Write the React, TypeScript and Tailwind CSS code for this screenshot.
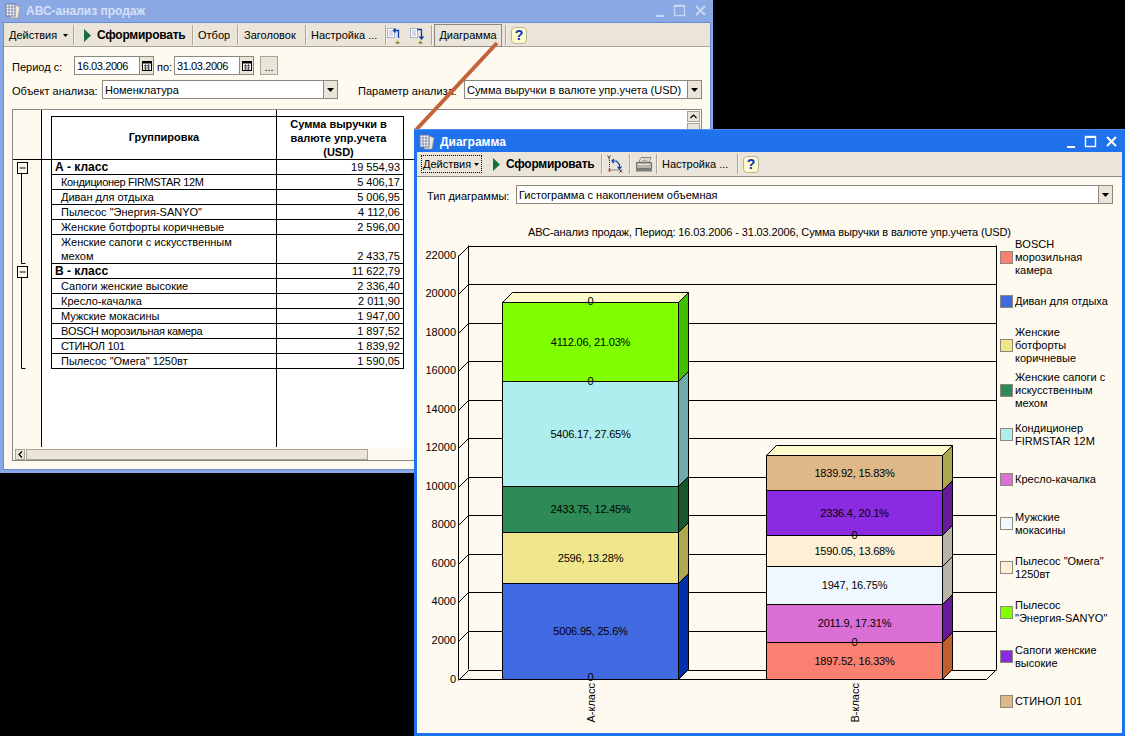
import React from 'react';

const ff = "font-['Liberation_Sans',Arial,sans-serif]";

const rowsA = [
  { name: 'Кондиционер FIRMSTAR 12M', val: '5 406,17', tight: true },
  { name: 'Диван для отдыха', val: '5 006,95' },
  { name: 'Пылесос "Энергия-SANYO"', val: '4 112,06' },
  { name: 'Женские ботфорты коричневые', val: '2 596,00' },
];
const rowsB = [
  { name: 'Сапоги женские высокие', val: '2 336,40' },
  { name: 'Кресло-качалка', val: '2 011,90' },
  { name: 'Мужские мокасины', val: '1 947,00' },
  { name: 'BOSCH морозильная камера', val: '1 897,52', tight: true },
  { name: 'СТИНОЛ 101', val: '1 839,92', tight: true },
  { name: 'Пылесос "Омега" 1250вт', val: '1 590,05' },
];

const legend = [
  { color: 'bg-[#FA8072]', text: 'BOSCH\nморозильная\nкамера' },
  { color: 'bg-[#4169E1]', text: 'Диван для отдыха' },
  { color: 'bg-[#F0E68C]', text: 'Женские\nботфорты\nкоричневые' },
  { color: 'bg-[#2E8B57]', text: 'Женские сапоги с\nискусственным\nмехом' },
  { color: 'bg-[#AFEEEE]', text: 'Кондиционер\nFIRMSTAR 12M' },
  { color: 'bg-[#DA70D6]', text: 'Кресло-качалка' },
  { color: 'bg-[#F0F8FF]', text: 'Мужские\nмокасины' },
  { color: 'bg-[#FFEFD5]', text: 'Пылесос "Омега"\n1250вт' },
  { color: 'bg-[#7FFF00]', text: 'Пылесос\n"Энергия-SANYO"' },
  { color: 'bg-[#8A2BE2]', text: 'Сапоги женские\nвысокие' },
  { color: 'bg-[#DEB887]', text: 'СТИНОЛ 101' },
];

type Seg = { y1: number; y2: number; fill: string; side: string; label: string };

const barA: Seg[] = [
  { y1: 302.5, y2: 381.5, fill: '#7FFF00', side: '#40BF00', label: '4112.06, 21.03%' },
  { y1: 381.5, y2: 486.5, fill: '#AFEEEE', side: '#6FAAAD', label: '5406.17, 27.65%' },
  { y1: 486.5, y2: 532.5, fill: '#2E8B57', side: '#17572C', label: '2433.75, 12.45%' },
  { y1: 532.5, y2: 583.5, fill: '#F0E68C', side: '#AFA84E', label: '2596, 13.28%' },
  { y1: 583.5, y2: 679.5, fill: '#4169E1', side: '#0030AA', label: '5006.95, 25.6%' },
];
const barB: Seg[] = [
  { y1: 455.5, y2: 490.5, fill: '#DEB887', side: '#ADA84E', label: '1839.92, 15.83%' },
  { y1: 490.5, y2: 535.5, fill: '#8A2BE2', side: '#661A99', label: '2336.4, 20.1%' },
  { y1: 535.5, y2: 566.5, fill: '#FFEFD5', side: '#B8B4A8', label: '1590.05, 13.68%' },
  { y1: 566.5, y2: 604.5, fill: '#F0F8FF', side: '#B8B4A8', label: '1947, 16.75%' },
  { y1: 604.5, y2: 642.5, fill: '#DA70D6', side: '#661A99', label: '2011.9, 17.31%' },
  { y1: 642.5, y2: 679.5, fill: '#FA8072', side: '#BF5F30', label: '1897.52, 16.33%' },
];

const ticks = [22000, 20000, 18000, 16000, 14000, 12000, 10000, 8000, 6000, 4000, 2000, 0];

const Bar = ({ x1, x2, segs, zeros, axis }: { x1: number; x2: number; segs: Seg[]; zeros: number[]; axis: string }) => {
  const cx = (x1 + x2) / 2;
  const top = segs[0].y1;
  return (
    <g>
      <polygon points={`${x1},${top} ${x1 + 10},${top - 10} ${x2 + 10},${top - 10} ${x2},${top}`} fill="#FFFACD" stroke="#000" />
      {segs.map((s) => (
        <g key={s.label}>
          <polygon points={`${x2},${s.y1} ${x2 + 10},${s.y1 - 10} ${x2 + 10},${s.y2 - 10} ${x2},${s.y2}`} fill={s.side} stroke="#000" />
          <rect x={x1} y={s.y1} width={x2 - x1} height={s.y2 - s.y1} fill={s.fill} stroke="#000" />
        </g>
      ))}
      {segs.map((s) => (
        <text key={s.label} x={cx} y={(s.y1 + s.y2) / 2 + 3.5} textAnchor="middle" className="tracking-[-0.2px]">{s.label}</text>
      ))}
      {zeros.map((z) => (
        <text key={z} x={cx} y={z + 4} textAnchor="middle">0</text>
      ))}
      <text transform={`translate(${cx + 4} 722.5) rotate(-90)`}>{axis}</text>
    </g>
  );
};

const Chart = () => (
  <svg viewBox="417 239 581 490" className="w-[581px] h-[490px] shrink-0 text-[11px]" fill="#000">
    {ticks.map((t, i) => {
      const back = 245.5 + (i * 424) / 11;
      const by = Math.round(back) + 0.5;
      return (
        <g key={t}>
          <line x1="468.5" y1={by} x2="996.5" y2={by} stroke="#000" />
          <line x1="458.5" y1={by + 10} x2="468.5" y2={by} stroke="#000" />
          <text x="456" y={by + 12.5} textAnchor="end">{t}</text>
        </g>
      );
    })}
    <line x1="458.5" y1="255.5" x2="458.5" y2="679.5" stroke="#000" />
    <line x1="468.5" y1="245.5" x2="468.5" y2="669.5" stroke="#000" />
    <line x1="996.5" y1="245.5" x2="996.5" y2="669.5" stroke="#000" />
    <line x1="458.5" y1="679.5" x2="986.5" y2="679.5" stroke="#000" />
    <line x1="986.5" y1="679.5" x2="996.5" y2="669.5" stroke="#000" />
    <Bar x1={502.5} x2={678.5} segs={barA} zeros={[301, 381, 677]} axis="А-класс" />
    <Bar x1={766.5} x2={942.5} segs={barB} zeros={[535, 642]} axis="В-класс" />
  </svg>
);

const Sep = () => <div className="w-[2px] h-[20px] shrink-0 border-l border-r border-l-[#ACA899] border-r-[#F6F3EA]" />;

const Play = () => (
  <svg width="7" height="13" viewBox="0 0 7 13" className="shrink-0">
    <polygon points="0,0 7,6.5 0,13" fill="#17703C" />
  </svg>
);

const Help = () => (
  <div className="w-[16px] h-[17px] shrink-0 rounded-[4px] border border-[#B8B4A2] bg-[#FFFBC8] flex items-center justify-center text-[14px] leading-none font-bold text-[#0A2FC0]">?</div>
);

const DocIcon = () => (
  <svg width="16" height="16" viewBox="0 0 16 16" className="shrink-0">
    <polygon points="9,1.5 15,4 13,15 5,15" fill="#ECE8DC" stroke="#9A968A" strokeWidth="0.7" />
    <rect x="1" y="1" width="9" height="12" fill="#fff" stroke="#6E7A9A" />
    <path d="M1 4h9M1 7h9M1 10h9M4 1v12M7 1v12" stroke="#6E7A9A" strokeWidth="0.8" />
  </svg>
);

const MoveIcon = ({ flip }: { flip?: boolean }) => (
  <svg width="15" height="17" viewBox="0 0 15 17" className="shrink-0">
    <rect x="0.5" y="1.5" width="7" height="9" fill="#fff" stroke="#A6B2CC" />
    <path d="M2 4h4M2 6h4M2 8h4" stroke="#A6B2CC" />
    {flip ? (
      <path d="M7 2.5h4.5v9M9.5 9.5l2 2.5 2-2.5" fill="none" stroke="#0A3AB0" strokeWidth="1.3" />
    ) : (
      <path d="M11.5 11V3.5H6.5M8.5 1.5l-2 2 2 2" fill="none" stroke="#0A3AB0" strokeWidth="1.3" />
    )}
    <polygon points="10.5,12.5 14,16.5 7,16.5" fill="#E0CC80" />
    <path d="M10.5 14.5l-2 2h4z" fill="#5A5A48" />
  </svg>
);

const AxisIcon = () => (
  <svg width="16" height="18" viewBox="0 0 16 18" className="shrink-0">
    <path d="M2.5 5v10h10" fill="none" stroke="#333" strokeDasharray="1 1" />
    <rect x="1.5" y="14.5" width="2" height="2" fill="#C03020" />
    <path d="M5 6h4.5l3 3.5v4M10.5 11.5l2 2.5 2-2.5M7 4l-2 2 2 2" fill="none" stroke="#0A3AB0" strokeWidth="1.2" />
    <path d="M0.5 0.5l1.5 2 1.5-2M2 2.5v2M12.5 14.5l2.5 3M15 14.5l-2.5 3" stroke="#111" strokeWidth="0.8" fill="none" />
  </svg>
);

const PrinterIcon = () => (
  <svg width="18" height="15" viewBox="0 0 18 15" className="shrink-0">
    <polygon points="6,0.5 16,0.5 14,5 4,5" fill="#fff" stroke="#85857E" />
    <path d="M7 2h7M6.5 3.5h6" stroke="#A8A8A0" />
    <path d="M1.5 5.5h15v6h-15z" fill="#B6B4AC" stroke="#6E6E68" />
    <rect x="1" y="11.5" width="16" height="3" fill="#7E7E78" />
    <path d="M3 7.5h11" stroke="#E6E4DC" />
  </svg>
);

const Arrow = ({ small }: { small?: boolean }) =>
  small ? (
    <svg width="5" height="3" viewBox="0 0 5 3" className="block"><polygon points="0,0 5,0 2.5,3" fill="#000" /></svg>
  ) : (
    <svg width="7" height="4" viewBox="0 0 7 4" className="block"><polygon points="0,0 7,0 3.5,4" fill="#000" /></svg>
  );

const Field = ({ w, text }: { w: string; text: string }) => (
  <div className={`${w} h-[19px] shrink-0 flex bg-white border border-[#8C887C]`}>
    <div className="flex-1 min-w-0 pl-[2px] leading-[19px] whitespace-nowrap overflow-hidden">{text}</div>
    <div className="w-[14px] border-l border-[#8C887C] bg-[#EAE5D8] flex items-center justify-center"><Arrow /></div>
  </div>
);

const DateField = ({ text }: { text: string }) => (
  <div className="w-[80px] h-[19px] shrink-0 flex bg-white border border-[#8C887C]">
    <div className="flex-1 pl-[2px] leading-[19px] tracking-[-0.4px] overflow-hidden">{text}</div>
    <div className="w-[14px] border-l border-[#8C887C] bg-[#EAE5D8] flex items-center justify-center">
      <svg width="10" height="10" viewBox="0 0 10 10">
        <rect x="0.5" y="0.5" width="9" height="9" fill="#fff" stroke="#000" />
        <rect x="0" y="0" width="10" height="2.5" fill="#000" />
        <path d="M2 4.5h6M2 6.2h6M2 8h6M3.5 3v6M6.5 3v6" stroke="#333" strokeWidth="0.7" />
      </svg>
    </div>
  </div>
);

const WinButtons = ({ color }: { color: string }) => (
  <svg width="52" height="14" viewBox="0 0 52 14" className="shrink-0" stroke={color} fill="none">
    <path d="M0 12h8" strokeWidth="2" />
    <rect x="18.5" y="1.5" width="10" height="10" strokeWidth="1.4" />
    <path d="M18.5 2h10" strokeWidth="2" />
    <path d="M40 2l9 9M49 2l-9 9" strokeWidth="2" />
  </svg>
);

const TreeLines = () => (
  <svg width="28" height="287" viewBox="13 160 28 287" className="block">
    <g fill="none" stroke="#000">
      <rect x="17.5" y="162.5" width="10" height="11" fill="#FFFAF0" />
      <path d="M19.5 168h6" />
      <path d="M21.5 174v89.5h4" />
      <rect x="17.5" y="266.5" width="10" height="11" fill="#FFFAF0" />
      <path d="M19.5 272h6" />
      <path d="M21.5 278v90.5h4" />
    </g>
  </svg>
);

const Row = ({ name, val, bold, tall, tight }: { name: string; val: string; bold?: boolean; tall?: boolean; tight?: boolean }) => (
  <tr className={tall ? 'h-[29px]' : 'h-[15px]'}>
    <td />
    <td className={`border-l border-r border-b border-black align-top whitespace-pre-line ${bold ? 'pl-[3px] font-bold text-[12px]' : 'pl-[9px]'} ${tight ? 'tracking-[-0.35px]' : ''}`}>{name}</td>
    <td className="border-r border-b border-black text-right pr-[3px] align-bottom">{val}</td>
    <td />
  </tr>
);

const Report = () => (
  <section className="absolute left-0 top-0 w-[713px] h-[473px] flex flex-col bg-[#8AA8E4] pl-[3px] pr-[2px] pb-[3px]">
    <header className="h-[22px] shrink-0 flex items-center pl-[2px] pr-[3px] gap-[5px]">
      <DocIcon />
      <span className="flex-1 font-bold text-[12px] text-[#D6E0F6]">АВС-анализ продаж</span>
      <WinButtons color="#C8D6F2" />
    </header>
    <div className="flex-1 min-h-0 flex flex-col border border-[#6A8AD0] bg-[#FFFAF0]">
      <nav className="h-[24px] shrink-0 pt-[1px] flex items-center bg-[#EAE5D8] border-b border-[#ACA899]">
        <span className="pl-[5px] w-[59px]">Действия</span>
        <span className="w-[10px]"><Arrow small /></span>
        <Sep />
        <span className="w-[9px]" />
        <Play />
        <span className="ml-[6px] w-[95px] font-bold text-[12px] tracking-[-0.25px]">Сформировать</span>
        <Sep />
        <span className="ml-[4px] w-[39px]">Отбор</span>
        <Sep />
        <span className="ml-[5px] w-[61px]">Заголовок</span>
        <Sep />
        <span className="ml-[4px] w-[74px]">Настройка ...</span>
        <Sep />
        <span><MoveIcon /></span>
        <span className="ml-[8px]"><MoveIcon flip /></span>
        <span className="w-[6px]" />
        <Sep />
        <span className="ml-[1px] w-[68px] h-[23px] leading-[21px] text-center border border-[#8C887C]">Диаграмма</span>
        <span className="w-[3px]" />
        <Sep />
        <span className="ml-[4px]"><Help /></span>
      </nav>
      <div className="flex items-center mt-[9px] ml-[8px]">
        <span className="w-[62px] pt-[2px]">Период с:</span>
        <DateField text="16.03.2006" />
        <span className="w-[20px] pl-[3px] pt-[2px]">по:</span>
        <DateField text="31.03.2006" />
        <span className="ml-[6px] w-[18px] h-[19px] border border-[#A8A498] bg-[#EAE5D8] text-center leading-[20px]">...</span>
      </div>
      <div className="flex items-center mt-[5px] ml-[8px]">
        <span className="w-[90px] pt-[2px]">Объект анализа:</span>
        <Field w="w-[236px]" text="Номенклатура" />
        <span className="ml-[20px] w-[106px] pt-[2px]">Параметр анализа:</span>
        <Field w="w-[238px]" text="Сумма выручки в валюте упр.учета (USD)" />
      </div>
      <div className="mt-[10px] ml-[8px] mr-[8px] flex-1 min-h-0 flex flex-col border border-[#8C887C]">
        <div className="h-[337px] shrink-0 flex">
          <div className="w-[29px] shrink-0 border-r border-black">
            <div className="h-[50px] border-b border-black" />
            <TreeLines />
          </div>
          <table className="flex-1 h-[337px] table-fixed border-separate border-spacing-0 bg-white">
            <colgroup>
              <col className="w-[9px]" />
              <col className="w-[226px]" />
              <col className="w-[127px]" />
              <col />
            </colgroup>
            <tbody>
              <tr className="h-[6px]">
                <td />
                <td className="border-r border-black" />
                <td />
                <td />
              </tr>
              <tr className="h-[44px]">
                <td className="border-b border-black" />
                <td className="border border-black text-center font-bold pb-[2px]">Группировка</td>
                <td className="border-t border-r border-b border-black text-center font-bold leading-[14px] pr-[3px]">Сумма выручки в<br />валюте упр.учета<br />(USD)</td>
                <td className="border-b border-black" />
              </tr>
              <Row name="А - класс" val="19 554,93" bold />
              {rowsA.map((r) => <Row key={r.name} {...r} />)}
              <Row name={'Женские сапоги с искусственным\nмехом'} val="2 433,75" tall />
              <Row name="В - класс" val="11 622,79" bold />
              {rowsB.map((r) => <Row key={r.name} {...r} />)}
              <tr>
                <td />
                <td className="border-r border-black" />
                <td />
                <td />
              </tr>
            </tbody>
          </table>
          <div className="w-[13px] shrink-0 bg-white pt-[1px] mr-[1px]">
            <div className="h-[11px] border border-[#A8A498] bg-[#EAE5D8] flex items-center justify-center">
              <svg width="7" height="5" viewBox="0 0 7 5"><path d="M0.5 4l3-3 3 3" fill="none" stroke="#000" strokeWidth="1.2" /></svg>
            </div>
            <div className="h-[60px] mt-[1px] border border-[#A8A498] bg-[#EAE5D8]" />
          </div>
        </div>
        <div className="flex-1 flex items-center pl-[2px] pt-[1px]">
          <div className="w-[10px] h-[11px] border border-[#A8A498] bg-[#EAE5D8] flex items-center justify-center">
            <svg width="5" height="7" viewBox="0 0 5 7"><path d="M4 0.5l-3 3 3 3" fill="none" stroke="#000" strokeWidth="1.2" /></svg>
          </div>
          <div className="ml-[1px] w-[342px] h-[11px] border border-[#A8A498] bg-[#EAE5D8]" />
        </div>
      </div>
      <div className="h-[8px] shrink-0" />
    </div>
  </section>
);

const DiagramWindow = () => (
  <section className="absolute left-[414px] top-[129px] w-[711px] h-[607px] flex flex-col bg-[#1F72EC] px-[3px] pb-[3px] pt-[1px] border-t border-[#4A90F0]">
    <header className="h-[21px] shrink-0 flex items-center pl-[2px] pr-[3px] gap-[5px]">
      <DocIcon />
      <span className="flex-1 font-bold text-[12px] text-white">Диаграмма</span>
      <WinButtons color="#fff" />
    </header>
    <div className="flex-1 min-h-0 flex flex-col bg-[#FFFAF0]">
      <nav className="h-[25px] shrink-0 flex items-center bg-[#EAE5D8] border-b border-[#8C887C]">
        <span className="ml-[4px] w-[61px] h-[18px] pl-[1px] flex items-center gap-[3px] border border-dotted border-black">Действия<Arrow small /></span>
        <span className="w-[11px]" />
        <Play />
        <span className="ml-[6px] w-[95px] font-bold text-[12px] tracking-[-0.25px]">Сформировать</span>
        <Sep />
        <span className="ml-[4px]"><AxisIcon /></span>
        <span className="w-[6px]" />
        <Sep />
        <span className="ml-[4px]"><PrinterIcon /></span>
        <span className="w-[3px]" />
        <Sep />
        <span className="ml-[4px] w-[75px]">Настройка ...</span>
        <Sep />
        <span className="ml-[4px]"><Help /></span>
      </nav>
      <div className="flex items-center mt-[8px] ml-[10px]">
        <span className="w-[89px] pt-[2px]">Тип диаграммы:</span>
        <Field w="w-[597px]" text="Гистограмма с накоплением объемная" />
      </div>
      <div className="mt-[21px] h-[14px] leading-[14px] text-center tracking-[-0.12px]">АВС-анализ продаж, Период: 16.03.2006 - 31.03.2006, Сумма выручки в валюте упр.учета (USD)</div>
      <div className="flex">
        <Chart />
        <div className="-mt-[4px] ml-[2px] flex flex-col">
          {legend.map((l) => (
            <div key={l.text} className="h-[44.4px] flex items-center gap-[2px]">
              <div className={`w-[13px] h-[13px] shrink-0 border border-[#8C887C] ${l.color}`} />
              <div className="whitespace-pre-line leading-[13px]">{l.text}</div>
            </div>
          ))}
        </div>
      </div>
    </div>
  </section>
);

export default function App() {
  return (
    <div className={`relative w-[1125px] h-[736px] overflow-hidden bg-black text-[11px] leading-[14px] text-black ${ff}`}>
      <Report />
      <svg width="1125" height="736" viewBox="0 0 1125 736" className="absolute left-0 top-0">
        <line x1="497" y1="43" x2="415" y2="131" stroke="#C4623A" strokeWidth="4" />
      </svg>
      <DiagramWindow />
    </div>
  );
}
